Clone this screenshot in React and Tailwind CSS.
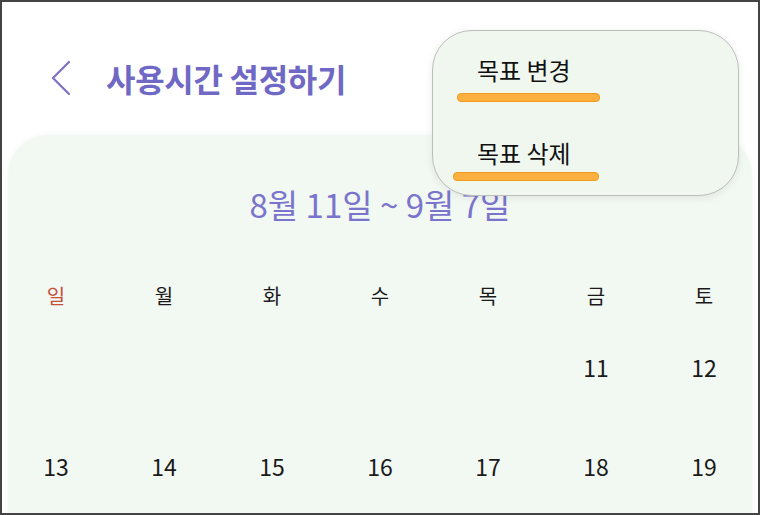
import React from 'react';

const FONT = { fontFamily: '"Noto Sans CJK KR", "Noto Sans", sans-serif' };

const weekdays = ['일', '월', '화', '수', '목', '금', '토'];

const weeks = [
  [null, null, null, null, null, 11, 12],
  [13, 14, 15, 16, 17, 18, 19],
];

function MenuItem({ label, barClass }) {
  return (
    <div className="flex flex-col">
      <span className="pl-[44px] text-[24px] leading-[28px] text-[#111]">{label}</span>
      <span className={`block h-[9px] rounded-[4px] bg-[#fbb040] border border-[#f29a1c] ${barClass}`} />
    </div>
  );
}

export default function App() {
  return (
    <div
      className="relative w-[760px] h-[515px] overflow-hidden border-2 border-[#444] bg-white"
      style={FONT}
    >
      {/* Header */}
      <div className="flex items-center h-[133px] pl-[48px] pt-[18px]">
        <svg width="22" height="36" viewBox="0 0 22 36" fill="none">
          <path d="M19 2 L3 18 L19 34" stroke="#7b70c4" strokeWidth="2.2" strokeLinecap="round" strokeLinejoin="round" />
        </svg>
        <h1 className="ml-[34px] text-[32px] font-bold tracking-[-0.3px] text-[#6f68c4]">사용시간 설정하기</h1>
      </div>

      {/* Calendar card */}
      <div className="mx-[6px] h-[400px] rounded-t-[40px] bg-[#f2f8f2] shadow-[0_0_6px_rgba(0,0,0,0.04)]">
        <p className="pt-[48px] text-center text-[33px] leading-[42px] text-[#7b74cc]">8월 11일 ~ 9월 7일</p>

        <div className="-mx-[6px] mt-[56px] grid grid-cols-7">
          {weekdays.map((d, i) => (
            <div
              key={d}
              className={`text-center text-[20px] leading-[30px] ${i === 0 ? 'text-[#c4503a]' : 'text-[#1a1a1a]'}`}
            >
              {d}
            </div>
          ))}
        </div>

        <div className="-mx-[6px] mt-[41px] flex flex-col gap-[69px]">
          {weeks.map((week, wi) => (
            <div key={wi} className="grid grid-cols-7">
              {week.map((n, i) => (
                <div key={i} className="text-center text-[23px] leading-[30px] text-[#1a1a1a]">
                  {n ?? ''}
                </div>
              ))}
            </div>
          ))}
        </div>
      </div>

      {/* Popup menu */}
      <div className="absolute left-[430px] top-[28px] w-[307px] h-[166px] rounded-[40px] border border-[#bdbdbd] bg-[#f0f7ef] shadow-[0_2px_8px_rgba(0,0,0,0.08)] pt-[25px] flex flex-col gap-[37px]">
        <MenuItem label="목표 변경" barClass="ml-[24px] w-[143px] mt-[9px]" />
        <MenuItem label="목표 삭제" barClass="ml-[20px] w-[146px] mt-[5px]" />
      </div>
    </div>
  );
}
